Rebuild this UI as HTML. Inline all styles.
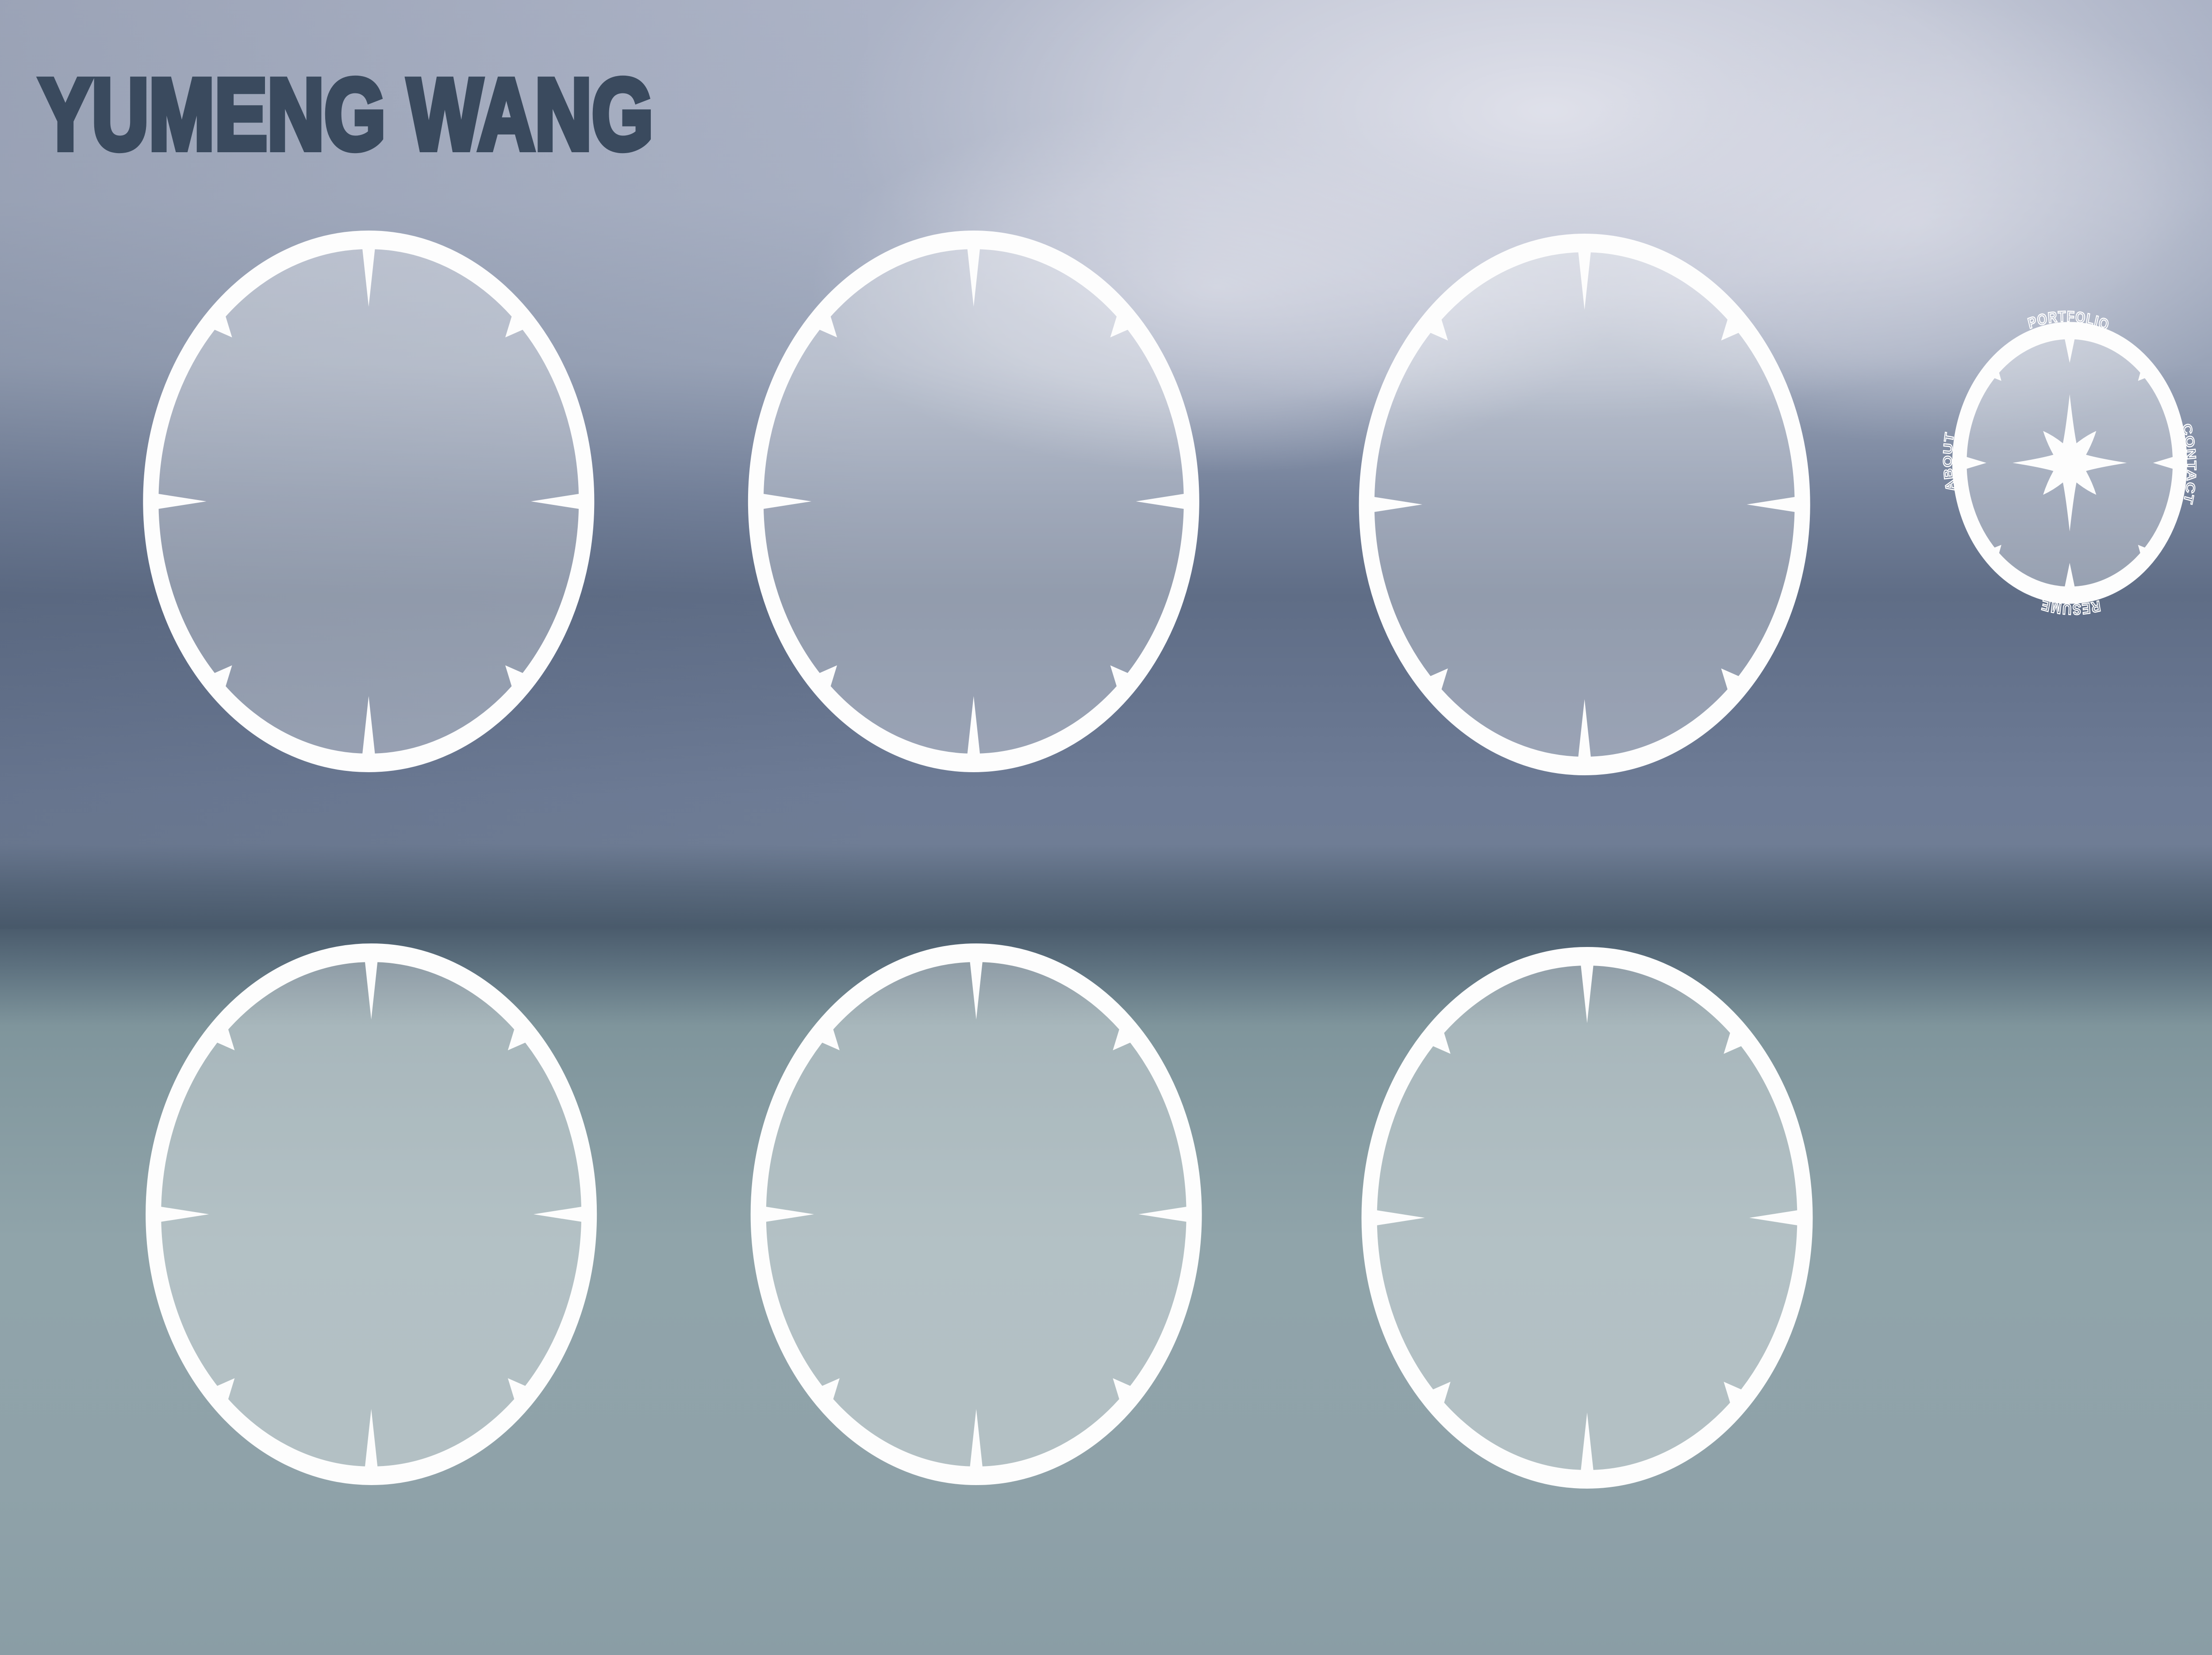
<!DOCTYPE html>
<html><head><meta charset="utf-8"><style>
html,body{margin:0;padding:0;width:100%;height:100%;overflow:hidden;background:#8a9aa8}
svg{display:block;position:fixed;left:0;top:0;width:100vw;height:100vh}
</style></head><body>
<svg viewBox="0 0 6000 3740" preserveAspectRatio="none" xmlns="http://www.w3.org/2000/svg">
<defs>
<linearGradient id="bg" x1="0" y1="0" x2="0" y2="1">
<stop offset="0" stop-color="#acb3c6"/>
<stop offset="0.12" stop-color="#a9b1c4"/>
<stop offset="0.22" stop-color="#9aa4b8"/>
<stop offset="0.30" stop-color="#74819a"/>
<stop offset="0.36" stop-color="#5f6d86"/>
<stop offset="0.42" stop-color="#66748e"/>
<stop offset="0.48" stop-color="#6e7c96"/>
<stop offset="0.51" stop-color="#6f7d95"/>
<stop offset="0.535" stop-color="#5a6a7e"/>
<stop offset="0.56" stop-color="#4a5b6c"/>
<stop offset="0.585" stop-color="#5e7280"/>
<stop offset="0.62" stop-color="#7f959c"/>
<stop offset="0.75" stop-color="#90a4aa"/>
<stop offset="0.9" stop-color="#8fa2a9"/>
<stop offset="1" stop-color="#8a9da5"/>
</linearGradient>
<radialGradient id="cloud" cx="0.5" cy="0.5" r="0.5">
<stop offset="0" stop-color="#e2e3ec" stop-opacity="0.95"/>
<stop offset="0.6" stop-color="#d8dae5" stop-opacity="0.6"/>
<stop offset="1" stop-color="#d0d3df" stop-opacity="0"/>
</radialGradient>
<linearGradient id="leftdark" x1="0" y1="0" x2="1" y2="0">
<stop offset="0" stop-color="#3c4a60" stop-opacity="0.15"/>
<stop offset="0.4" stop-color="#3c4a60" stop-opacity="0"/>
</linearGradient>
<g id="dial">
<circle r="580" fill="#ffffff" fill-opacity="0.32"/>
<circle r="591" fill="none" stroke="#fdfdfd" stroke-width="42"/>
<g fill="#fdfdfd">
<path id="ct" d="M-18,-578 L0,-440 L18,-578 Z"/>
<use href="#ct" transform="rotate(90)"/>
<use href="#ct" transform="rotate(180)"/>
<use href="#ct" transform="rotate(270)"/>
<path id="dt" d="M-25,-578 L0,-524 L25,-578 Z" transform="rotate(45)"/>
<use href="#dt" transform="rotate(90)"/>
<use href="#dt" transform="rotate(180)"/>
<use href="#dt" transform="rotate(270)"/>
</g>
</g>
</defs>
<rect width="6000" height="3740" fill="url(#bg)"/>
<ellipse cx="4200" cy="250" rx="1900" ry="700" fill="url(#cloud)"/>
<ellipse cx="3300" cy="650" rx="1100" ry="420" fill="url(#cloud)" opacity="0.7"/>
<ellipse cx="5200" cy="500" rx="1000" ry="500" fill="url(#cloud)" opacity="0.6"/>
<rect width="6000" height="2100" fill="url(#leftdark)"/>

<text x="106" y="337" font-family="Liberation Sans, sans-serif" font-weight="bold" font-size="228" fill="#3a4a5e" stroke="#3a4a5e" stroke-width="14" stroke-linejoin="miter" textLength="1666" lengthAdjust="spacingAndGlyphs">YUMENG WANG</text>

<use href="#dial" transform="translate(1000,1133)"/>
<use href="#dial" transform="translate(2641,1133)"/>
<use href="#dial" transform="translate(4298,1140)"/>
<use href="#dial" transform="translate(1007,2744)"/>
<use href="#dial" transform="translate(2648,2744)"/>
<use href="#dial" transform="translate(4305,2752)"/>

<g transform="translate(5614,1046)">
<path id="tp" d="M-219,219 A310,310 0 1 1 219,-219 A310,310 0 1 1 -219,219" fill="none"/>
<g font-family="Liberation Sans, sans-serif" font-weight="bold" font-size="34" fill="none" stroke="#ffffff" stroke-width="2.5" text-anchor="middle" letter-spacing="2">
<text><textPath href="#tp" startOffset="12.5%">ABOUT</textPath></text>
<text><textPath href="#tp" startOffset="37.5%">PORTFOLIO</textPath></text>
<text><textPath href="#tp" startOffset="62.5%">CONTACT</textPath></text>
<text><textPath href="#tp" startOffset="87.5%">RESUME</textPath></text>
</g>
<circle r="285" fill="#ffffff" fill-opacity="0.35"/>
<circle r="299" fill="none" stroke="#fdfdfd" stroke-width="39"/>
<g fill="#fdfdfd">
<path id="sct" d="M-15,-286 L0,-226 L15,-286 Z"/>
<use href="#sct" transform="rotate(90)"/>
<use href="#sct" transform="rotate(180)"/>
<use href="#sct" transform="rotate(270)"/>
<path id="sdt" d="M-12,-286 L0,-262 L12,-286 Z" transform="rotate(45)"/>
<use href="#sdt" transform="rotate(90)"/>
<use href="#sdt" transform="rotate(180)"/>
<use href="#sdt" transform="rotate(270)"/>
<path d="M0,-155 Q10,-80 18.4,-44.3 Q45,-62 72.1,-72.1 Q62,-45 44.3,-18.4 Q80,-10 155,0 Q80,10 44.3,18.4 Q62,45 72.1,72.1 Q45,62 18.4,44.3 Q10,80 0,155 Q-10,80 -18.4,44.3 Q-45,62 -72.1,72.1 Q-62,45 -44.3,18.4 Q-80,10 -155,0 Q-80,-10 -44.3,-18.4 Q-62,-45 -72.1,-72.1 Q-45,-62 -18.4,-44.3 Q-10,-80 0,-155 Z"/>
</g>
</g>
</svg>
</body></html>
